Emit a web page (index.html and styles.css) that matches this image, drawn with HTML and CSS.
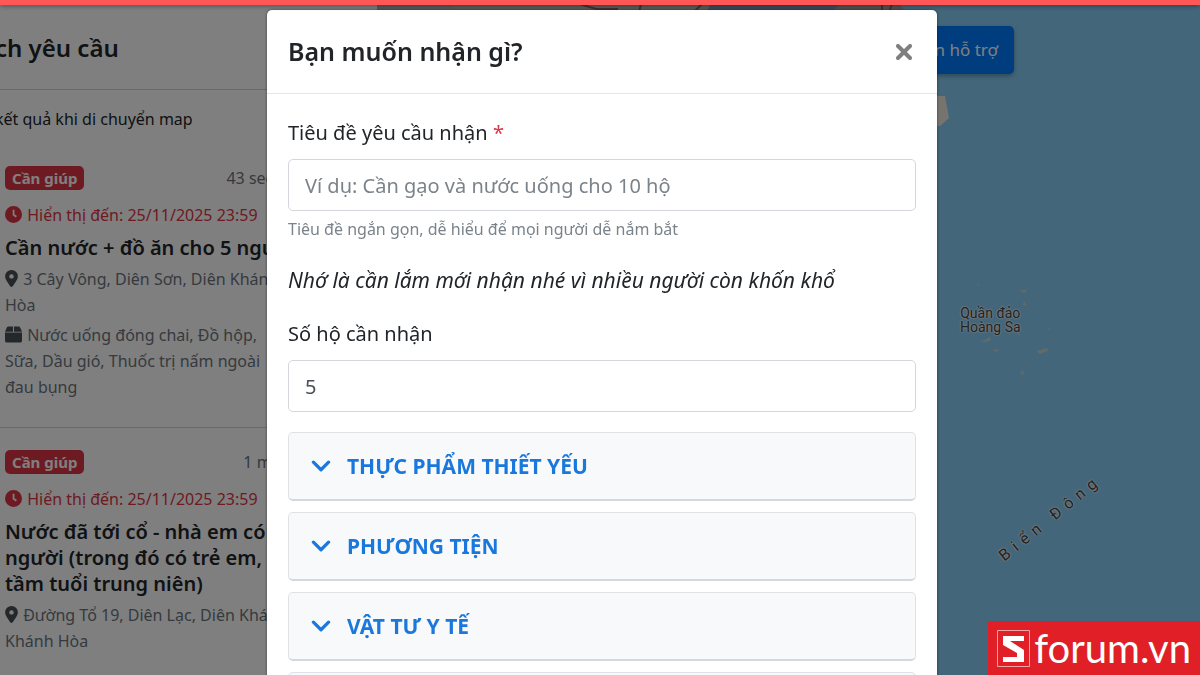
FILE: index.html
```
<!DOCTYPE html>
<html lang="vi">
<head>
  <meta charset="UTF-8">
  <meta name="viewport" content="width=device-width, initial-scale=1.0">
  <title>Bạn muốn nhận gì?</title>
  <link rel="stylesheet" href="styles.css">
</head>
<body>
  <svg class="sprite" aria-hidden="true">
    <symbol id="clock" viewBox="0 0 16 16">
      <path fill-rule="evenodd" d="M8 0a8 8 0 1 0 0 16A8 8 0 0 0 8 0zM7.2 3.5h1.7v4.3l2.3 1.7-1 1.3-3-2.2z"/>
    </symbol>
    <symbol id="pin" viewBox="0 0 12 16">
      <path fill-rule="evenodd" d="M6 0a6 6 0 0 0-6 6c0 2.6 3.4 7.2 5.2 9.6a1 1 0 0 0 1.6 0C8.6 13.2 12 8.6 12 6a6 6 0 0 0-6-6zM6 3.9a2.1 2.1 0 1 1 0 4.2 2.1 2.1 0 0 1 0-4.2z"/>
    </symbol>
    <symbol id="box" viewBox="0 0 18 17">
      <path d="M3.5 0h5v5.500H0L1.800 1.300A2 2 0 0 1 3.500 0zM9.500 0h5a2 2 0 0 1 1.700 1.300L18 5.500H9.500zM0 6.500h18V15a2 2 0 0 1-2 2H2a2 2 0 0 1-2-2z"/>
    </symbol>
    <symbol id="chevron" viewBox="0 0 18 12">
      <path d="M2 2l7 7 7-7" fill="none" stroke="currentColor" stroke-width="3" stroke-linecap="round" stroke-linejoin="round"/>
    </symbol>
  </svg>

  <div class="page">
    <aside class="sidebar">
      <header class="sidebar-header">
        <h2>ch yêu cầu</h2>
      </header>
      <p class="filter">kết quả khi di chuyển map</p>

      <article class="request">
        <div class="request-top">
          <span class="badge">Cần giúp</span>
          <span class="time">43 seconds ago</span>
        </div>
        <p class="expire"><svg class="icon"><use href="#clock"/></svg> Hiển thị đến: 25/11/2025 23:59</p>
        <h3>Cần nước + đồ ăn cho 5 người</h3>
        <p class="address"><svg class="icon icon-pin"><use href="#pin"/></svg> 3 Cây Vông, Diên Sơn, Diên Khánh,<br>Hòa</p>
        <p class="items"><svg class="icon icon-box"><use href="#box"/></svg> Nước uống đóng chai, Đồ hộp,<br>Sữa, Dầu gió, Thuốc trị nấm ngoài<br>đau bụng</p>
      </article>

      <article class="request">
        <div class="request-top">
          <span class="badge">Cần giúp</span>
          <span class="time">1 minute ago</span>
        </div>
        <p class="expire"><svg class="icon"><use href="#clock"/></svg> Hiển thị đến: 25/11/2025 23:59</p>
        <h3>Nước đã tới cổ - nhà em có<br>người (trong đó có trẻ em,<br>tầm tuổi trung niên)</h3>
        <p class="address"><svg class="icon icon-pin"><use href="#pin"/></svg> Đường Tổ 19, Diên Lạc, Diên Khánh,<br>Khánh Hòa</p>
      </article>
    </aside>

    <main class="map">
      <svg class="land" width="823" height="400" aria-hidden="true">
        <path d="M0 0h76v14H0z" fill="#b9b6b6"/>
        <path d="M74 0h244l-30 14H74z" fill="#b4bfae"/>
        <path d="M318 0h150l-20 14H288z" fill="#b4bfae"/>
        <path d="M336 0h130l-12 14H328z" fill="#7f98ba"/>
        <path d="M466 0h54l10 14h-76z" fill="#aca69c"/>
        <path d="M203 4l16 5h22M264 4l-2 8M325 4l-8 8M505 4v8M515 4l-3 8" fill="none" stroke="#866" stroke-width="2"/>
        <path d="M556 96h12l4 22-9 8h-7z" fill="#efe9de"/>
        <g fill="#c9d6cc">
          <path d="M643 290l7 0-3 3zM647 301l3 5-4-1zM660 351l10-3 1 3-9 3zM616 349l7 1-4 2zM604 342l9-5 1 3-5 2zM643 371l5 1-3 3zM671 328l2 1-1 2zM600 284h2v2zM641 333l2 1-1 2z"/>
        </g>
      </svg>
      <button class="support" type="button">Cần hỗ trợ</button>
      <span class="place islands">Quần đảo<br>Hoàng Sa</span>
      <span class="place sea">Biển Đông</span>
    </main>
  </div>

  <div class="backdrop">
    <div class="modal" role="dialog" aria-labelledby="modal-title">
      <header class="modal-header">
        <h1 id="modal-title">Bạn muốn nhận gì?</h1>
        <button class="close" type="button" aria-label="Đóng">
          <svg width="16" height="16" viewBox="0 0 16 16"><path d="M2 2l12 12M14 2L2 14" stroke="currentColor" stroke-width="4" stroke-linecap="round"/></svg>
        </button>
      </header>
      <form class="modal-body">
        <label for="title">Tiêu đề yêu cầu nhận <span class="required">*</span></label>
        <input id="title" type="text" placeholder="Ví dụ: Cần gạo và nước uống cho 10 hộ">
        <small>Tiêu đề ngắn gọn, dễ hiểu để mọi người dễ nắm bắt</small>
        <p class="note">Nhớ là cần lắm mới nhận nhé vì nhiều người còn khốn khổ</p>
        <label for="households">Số hộ cần nhận</label>
        <input id="households" type="text" inputmode="numeric" value="5">
        <div class="groups">
          <button class="group" type="button"><svg class="chevron"><use href="#chevron"/></svg>THỰC PHẨM THIẾT YẾU</button>
          <button class="group" type="button"><svg class="chevron"><use href="#chevron"/></svg>PHƯƠNG TIỆN</button>
          <button class="group" type="button"><svg class="chevron"><use href="#chevron"/></svg>VẬT TƯ Y TẾ</button>
          <button class="group" type="button" aria-label="Nhóm khác"></button>
        </div>
      </form>
    </div>
  </div>

  <div class="topbar"></div>
  <div class="watermark">
    <svg width="33" height="37" viewBox="0 0 33 37" aria-hidden="true">
      <path d="M.5.5h32v36H.5z" fill="none" stroke="#f6a3a6"/>
      <path d="M6 6h21v5H13l14 9v12H6v-5h14v-4L6 15z" fill="#fff"/>
    </svg>
    <span>forum.vn</span>
  </div>
</body>
</html>
```

FILE: styles.css
```
* {
  box-sizing: border-box;
}

body {
  margin: 0;
  overflow: hidden;
  font-family: "Noto Sans", "Open Sans", sans-serif;
  font-size: 20px;
  line-height: 32px;
  color: #212529;
}

h1, h2, h3, p {
  margin: 0;
  font-weight: 600;
}

p {
  font-weight: 400;
}

button, input {
  font: inherit;
}

.sprite {
  display: none;
}

.page {
  display: grid;
  grid-template-columns: 377px 1fr;
  height: 100vh;
}

/* request list */
.sidebar {
  overflow: hidden;
  background: #fff;
  font-size: 16px;
  line-height: 26px;
  white-space: nowrap;
}

.sidebar-header {
  padding: 32px 0 25px;
  border-bottom: 1px solid #d0d4d8;
}

.sidebar-header h2 {
  margin-left: -5px;
  font-size: 24px;
  line-height: 32px;
}

.filter {
  margin: 16px 0 12px -5px;
}

.request {
  padding: 22px 34px 27px 5px;
  color: #6c757d;
}

.request + .request {
  border-top: 1px solid #d0d4d8;
}

.request-top {
  display: flex;
  justify-content: space-between;
  align-items: center;
  height: 24px;
  margin-bottom: 12px;
}

.badge {
  padding: 0 7px;
  border-radius: 5px;
  background: #dc3545;
  color: #fff;
  font-size: 15px;
  font-weight: 700;
  line-height: 24px;
}

.expire {
  color: #dc3545;
}

.request h3 {
  margin: 7px 0 5px;
  color: #212529;
  font-size: 20px;
}

.address {
  margin-bottom: 4px;
}

.icon {
  width: 17px;
  height: 17px;
  margin-right: 1px;
  fill: currentColor;
  vertical-align: -2px;
}

.icon-pin {
  width: 13px;
}

.icon-pin, .icon-box {
  color: #495057;
}

/* map */
.map {
  position: relative;
  overflow: hidden;
  background: #86ccf4;
}

.land {
  position: absolute;
  top: 0;
  left: 0;
}

.support {
  position: absolute;
  top: 26px;
  right: 186px;
  padding: 8px 16px;
  border: 0;
  border-radius: 5px;
  background: #007bff;
  color: #fff;
  font-size: 17px;
  box-shadow: 0 2px 4px rgba(0, 0, 0, 0.3);
}

.place {
  position: absolute;
  color: #444;
  font-family: Roboto, sans-serif;
  text-align: center;
  text-shadow: 0 0 1px #fff, 0 0 2px #fff, 0 0 2px #fff;
  white-space: nowrap;
}

.islands {
  top: 306px;
  left: 583px;
  font-size: 14px;
  line-height: 14px;
}

.sea {
  top: 509px;
  left: 610px;
  font-size: 16px;
  line-height: 18px;
  letter-spacing: 6px;
  transform: rotate(-39deg);
}

/* modal */
.backdrop {
  position: fixed;
  inset: 0;
  padding: 10px 0 0 4px;
  overflow: hidden;
  background: rgba(0, 0, 0, 0.5);
}

.modal {
  max-width: 670px;
  margin: 0 auto;
  border-radius: 5px;
  background: #fff;
  box-shadow: 0 0 3px rgba(0, 0, 0, 0.5);
}

.modal-header {
  display: flex;
  justify-content: space-between;
  align-items: center;
  padding: 21px;
  border-bottom: 1px solid #e3e6e9;
}

.modal-header h1 {
  font-size: 25px;
  line-height: 41px;
}

.close {
  display: flex;
  padding: 4px;
  border: 0;
  background: none;
  color: #7f7f7f;
}

.modal-body {
  display: flex;
  flex-direction: column;
  padding: 23px 21px;
}

.modal-body label {
  margin-bottom: 10px;
}

.required {
  color: #dc3545;
}

.modal-body input {
  height: 52px;
  padding: 0 16px;
  border: 1px solid #d3d7db;
  border-radius: 5px;
  background: #fff;
  color: #495057;
}

.modal-body input::placeholder {
  color: #7b838a;
}

.modal-body small {
  margin-top: 5px;
  color: #7b838a;
  font-size: 16px;
  line-height: 26px;
}

.note {
  margin: 22px 0;
  font-size: 21px;
  font-style: italic;
}

.groups {
  display: flex;
  flex-direction: column;
  gap: 11px;
  margin-top: 20px;
}

.group {
  display: flex;
  align-items: center;
  gap: 16px;
  height: 69px;
  padding: 0 22px;
  border: 1px solid #dee2e6;
  border-bottom: 2px solid #d5d7d9;
  border-radius: 5px;
  background: #f8f9fb;
  color: #1a78dc;
  font-size: 21px;
  font-weight: 700;
}

.chevron {
  width: 20px;
  height: 13px;
}

/* red bar and watermark */
.topbar {
  position: fixed;
  inset: 0 0 auto;
  height: 5px;
  background: #ff5757;
  box-shadow: 0 1px 5px rgba(0, 0, 0, 0.4);
}

.watermark {
  position: fixed;
  right: 0;
  bottom: 0;
  display: flex;
  align-items: center;
  gap: 4px;
  height: 54px;
  padding: 0 9px;
  background: #e01f26;
  color: #fff;
  font-family: Lato, sans-serif;
  font-size: 40px;
  font-weight: 400;
}
```
